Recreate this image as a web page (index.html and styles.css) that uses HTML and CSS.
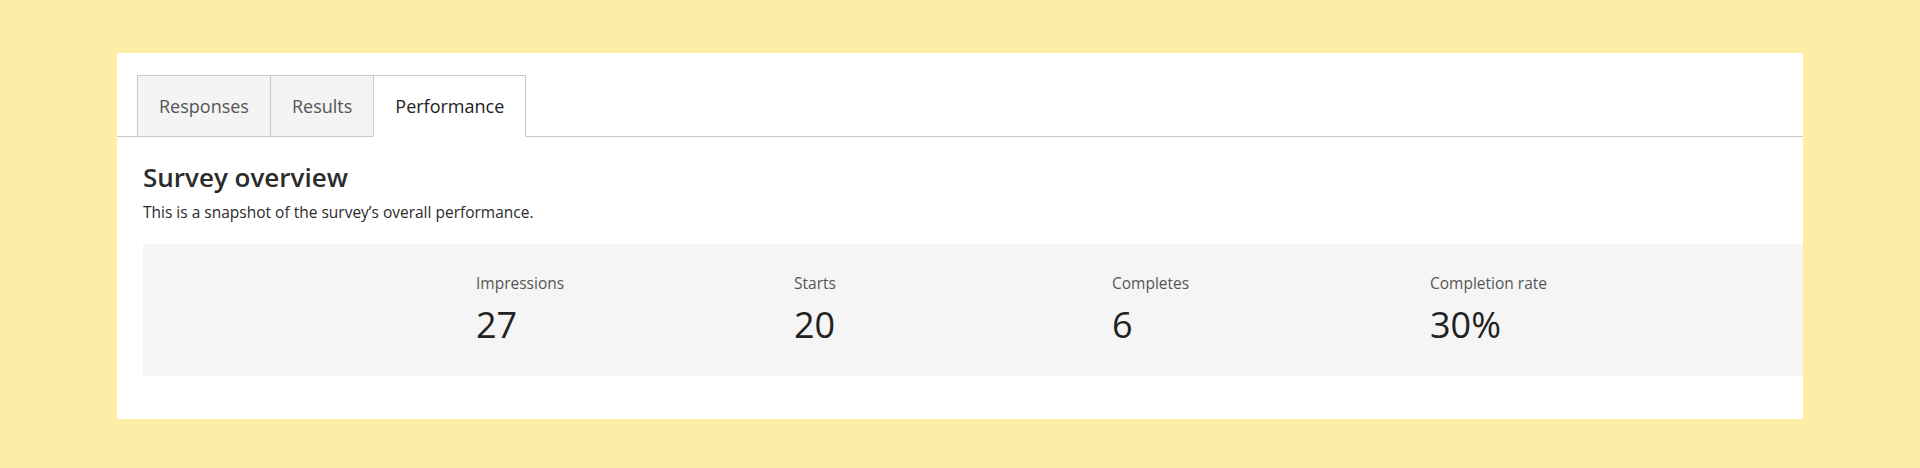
FILE: index.html
```html
<!DOCTYPE html>
<html lang="en">
<head>
<meta charset="utf-8">
<title>Survey performance</title>
<link rel="stylesheet" href="styles.css">
</head>
<body>
<div class="panel">
  <div class="tabs">
    <div class="tab">Responses</div>
    <div class="tab">Results</div>
    <div class="tab active">Performance</div>
  </div>
  <div class="content">
    <h1 class="title">Survey overview</h1>
    <p class="subtitle">This is a snapshot of the survey’s overall performance.</p>
    <div class="stats">
      <div class="stat">
        <div class="stat-label">Impressions</div>
        <div class="stat-value">27</div>
      </div>
      <div class="stat">
        <div class="stat-label">Starts</div>
        <div class="stat-value">20</div>
      </div>
      <div class="stat">
        <div class="stat-label">Completes</div>
        <div class="stat-value">6</div>
      </div>
      <div class="stat">
        <div class="stat-label">Completion rate</div>
        <div class="stat-value">30%</div>
      </div>
    </div>
  </div>
</div>
</body>
</html>
```

FILE: styles.css
```css
html, body {
  margin: 0;
  padding: 0;
}

body {
  background: #feeda6;
  font-family: "Open Sans", "Noto Sans", sans-serif;
  padding: 53px 117px 49px;
  height: 468px;
  box-sizing: border-box;
}

.panel {
  background: #ffffff;
  height: 366px;
  overflow: hidden;
}

.tabs {
  display: flex;
  padding: 22px 0 0 20px;
  border-bottom: 1px solid #c9c9c9;
}

.tab {
  box-sizing: border-box;
  height: 62px;
  margin-bottom: -1px;
  padding: 0 21px;
  display: flex;
  align-items: center;
  font-size: 18px;
  color: #555555;
  background: #f4f4f4;
  border: 1px solid #c9c9c9;
}

.tab + .tab {
  margin-left: -1px;
}

.tab.active {
  background: #ffffff;
  color: #222222;
  border-bottom-color: #ffffff;
}

.content {
  padding-left: 26px;
}

.title {
  margin: 24px 0 0;
  font-size: 26px;
  line-height: 32px;
  font-weight: 600;
  color: #2b2b2b;
}

.subtitle {
  margin: 9px 0 0;
  font-size: 15.5px;
  line-height: 20px;
  color: #2b2b2b;
}

.stats {
  margin-top: 22px;
  height: 132px;
  box-sizing: border-box;
  padding: 29px 0 0 333px;
  background: #f5f5f5;
  display: grid;
  grid-template-columns: repeat(4, 318px);
  align-content: start;
}

.stat-label {
  font-size: 15.5px;
  line-height: 20px;
  color: #555555;
}

.stat-value {
  margin-top: 8px;
  font-size: 36px;
  line-height: 48px;
  color: #222222;
}
```
